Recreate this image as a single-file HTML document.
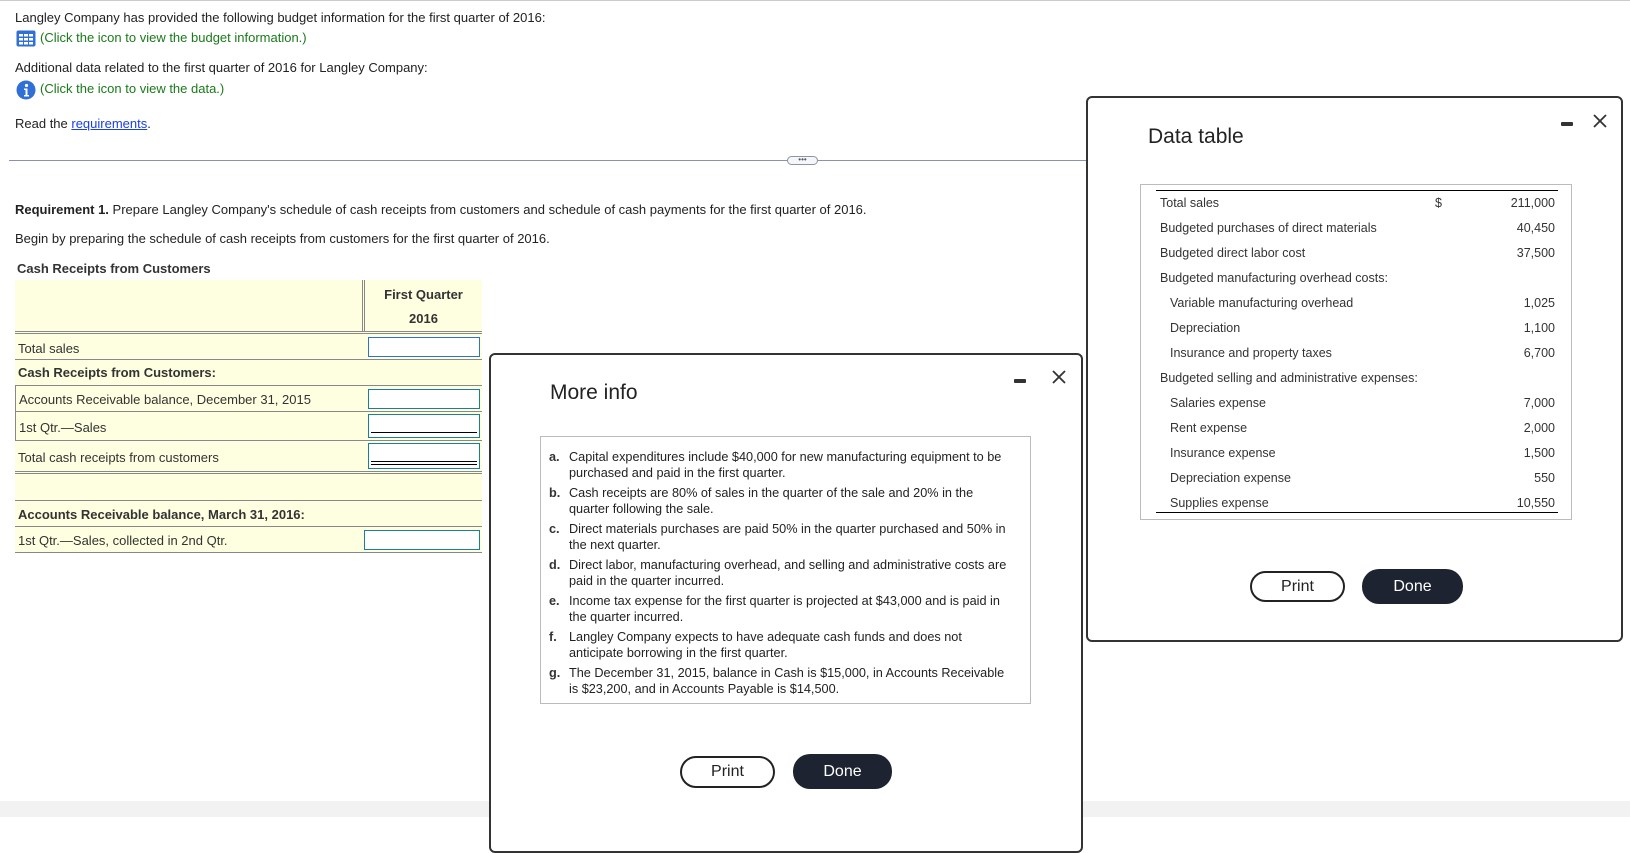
<!DOCTYPE html>
<html><head><meta charset="utf-8"><style>
*{margin:0;padding:0;box-sizing:border-box}
body{width:1630px;height:817px;position:relative;overflow:hidden;background:#fff;font-family:"Liberation Sans",Arial,sans-serif;font-size:13px;color:#222}
.a{position:absolute;white-space:nowrap}
.g{color:#1a7a1a}
.row{position:absolute;left:15px;width:467px;background:#fefee0;color:#333;font-size:13px}
.inp{position:absolute;border:1px solid #1a7e9c;background:#fff}
.btnp{position:absolute;border:2px solid #222;border-radius:16px;background:#fff;text-align:center;font-size:16px;color:#222}
.btnd{position:absolute;border-radius:17px;background:#1d2330;color:#fff;text-align:center;font-size:16px}
.modal{position:absolute;background:#fff;border:2px solid #333;border-radius:6px}
.mi li{list-style:none;position:relative;padding-left:28px;margin-bottom:4px;line-height:16px}
.mi b{position:absolute;left:8px;color:#333}
.dt div{position:absolute;white-space:nowrap;color:#333;font-size:12.5px}
</style></head><body>
<div class="a" style="left:0;top:0;width:1630px;height:1px;background:#ccc"></div>
<div class="a" style="left:15px;top:10px">Langley Company has provided the following budget information for the first quarter of 2016:</div>
<svg class="a" style="left:16px;top:30px" width="20" height="17" viewBox="0 0 20 17"><rect x="0.5" y="0.5" width="19" height="16" rx="2" fill="#2f6fd6"/><g fill="#fff"><rect x="3" y="4" width="4" height="2.5"/><rect x="8" y="4" width="4" height="2.5"/><rect x="13" y="4" width="4" height="2.5"/><rect x="3" y="8" width="4" height="2.5"/><rect x="8" y="8" width="4" height="2.5"/><rect x="13" y="8" width="4" height="2.5"/><rect x="3" y="12" width="4" height="2.5"/><rect x="8" y="12" width="4" height="2.5"/><rect x="13" y="12" width="4" height="2.5"/></g></svg>
<div class="a g" style="left:40px;top:30px">(Click the icon to view the budget information.)</div>
<div class="a" style="left:15px;top:60px">Additional data related to the first quarter of 2016 for Langley Company:</div>
<svg class="a" style="left:16px;top:80px" width="20" height="20" viewBox="0 0 20 20"><circle cx="10" cy="10" r="9.5" fill="#2f6fd6"/><circle cx="10.5" cy="5.5" r="1.6" fill="#fff"/><path d="M8 8.5h3.5v6.5h1.5v1.5H8V15h1.5v-5H8z" fill="#fff"/></svg>
<div class="a g" style="left:40px;top:81px">(Click the icon to view the data.)</div>
<div class="a" style="left:15px;top:116px">Read the <span style="color:#1a3ee8;text-decoration:underline">requirements</span>.</div>
<div class="a" style="left:9px;top:160px;width:1080px;height:1px;background:#8a94a6"></div>
<div class="a" style="left:787px;top:156px;width:31px;height:9px;border:1px solid #8a94a6;border-radius:5px;background:#f4f6f8;font-size:8px;line-height:5px;text-align:center;color:#555">•••</div>
<div class="a" style="left:15px;top:202px"><b>Requirement 1.</b> Prepare Langley Company's schedule of cash receipts from customers and schedule of cash payments for the first quarter of 2016.</div>
<div class="a" style="left:15px;top:231px">Begin by preparing the schedule of cash receipts from customers for the first quarter of 2016.</div>
<div class="a" style="left:17px;top:261px;font-weight:bold;color:#333">Cash Receipts from Customers</div>

<div class="row" style="top:280px;height:51px"></div>
<div class="a" style="left:362px;top:280px;width:3px;height:194px;border-left:1px solid #888;border-right:1px solid #888"></div>
<div class="a" style="left:365px;top:283px;width:117px;text-align:center;font-weight:bold;color:#333;line-height:24px">First Quarter<br>2016</div>
<div class="row" style="top:331px;height:28px;border-top:3px double #888"><span class="a" style="left:3px;top:7px">Total sales</span></div>
<div class="row" style="top:359px;height:26px;border-top:1px solid #888"><span class="a" style="left:3px;top:5px;font-weight:bold">Cash Receipts from Customers:</span></div>
<div class="row" style="top:385px;height:26px;border-top:1px solid #888;border-left:1px solid #888"><span class="a" style="left:3px;top:6px">Accounts Receivable balance, December 31, 2015</span></div>
<div class="row" style="top:411px;height:29px;border-top:1px solid #888;border-left:1px solid #888"><span class="a" style="left:3px;top:8px">1st Qtr.—Sales</span></div>
<div class="row" style="top:440px;height:34px;border-top:1px solid #888;border-bottom:3px double #888"><span class="a" style="left:3px;top:9px">Total cash receipts from customers</span></div>
<div class="row" style="top:474px;height:26px"></div>
<div class="row" style="top:500px;height:26px;border-top:1px solid #888"><span class="a" style="left:3px;top:6px;font-weight:bold">Accounts Receivable balance, March 31, 2016:</span></div>
<div class="row" style="top:526px;height:27px;border-top:1px solid #888;border-bottom:1px solid #888"><span class="a" style="left:3px;top:6px">1st Qtr.—Sales, collected in 2nd Qtr.</span></div>
<div class="inp" style="left:368px;top:337px;width:112px;height:20px;border-color:#2f6fd6"></div>
<div class="inp" style="left:368px;top:389px;width:112px;height:20px"></div>
<div class="inp" style="left:368px;top:414px;width:112px;height:24px"><div class="a" style="left:2px;top:17px;width:106px;height:1px;background:#000"></div></div>
<div class="inp" style="left:368px;top:443px;width:112px;height:26px"><div class="a" style="left:2px;top:17px;width:106px;height:4px;border-top:1px solid #000;border-bottom:1px solid #000"></div></div>
<div class="inp" style="left:364px;top:530px;width:116px;height:20px"></div>

<div class="a" style="left:0;top:801px;width:1630px;height:16px;background:#f2f2f2"></div>

<div class="modal" style="left:489px;top:353px;width:594px;height:500px">
 <div class="a" style="left:59px;top:26px;font-size:21px;color:#222">More info</div>
 <div class="a" style="left:523px;top:24px;width:12px;height:4px;background:#333;border-radius:1px"></div>
 <svg class="a" style="left:560px;top:14px" width="16" height="16" viewBox="0 0 16 16"><path d="M2 2L14 14M14 2L2 14" stroke="#333" stroke-width="1.8"/></svg>
 <div class="a mi" style="left:49px;top:81px;width:491px;height:268px;border:1px solid #bbb;white-space:normal;padding-top:12px;padding-right:22px;font-size:12.7px">
  <ul>
  <li><b>a.</b>Capital expenditures include $40,000 for new manufacturing equipment to be purchased and paid in the first quarter.</li>
  <li><b>b.</b>Cash receipts are 80% of sales in the quarter of the sale and 20% in the quarter following the sale.</li>
  <li><b>c.</b>Direct materials purchases are paid 50% in the quarter purchased and 50% in the next quarter.</li>
  <li><b>d.</b>Direct labor, manufacturing overhead, and selling and administrative costs are paid in the quarter incurred.</li>
  <li><b>e.</b>Income tax expense for the first quarter is projected at $43,000 and is paid in the quarter incurred.</li>
  <li><b>f.</b>Langley Company expects to have adequate cash funds and does not anticipate borrowing in the first quarter.</li>
  <li><b>g.</b>The December 31, 2015, balance in Cash is $15,000, in Accounts Receivable is $23,200, and in Accounts Payable is $14,500.</li>
  </ul>
 </div>
 <div class="btnp" style="left:189px;top:401px;width:95px;height:32px;line-height:28px">Print</div>
 <div class="btnd" style="left:302px;top:399px;width:99px;height:35px;line-height:35px">Done</div>
</div>

<div class="modal" style="left:1086px;top:96px;width:537px;height:546px">
 <div class="a" style="left:60px;top:27px;font-size:21px;color:#222">Data table</div>
 <div class="a" style="left:473px;top:24px;width:12px;height:4px;background:#333;border-radius:1px"></div>
 <svg class="a" style="left:504px;top:15px" width="16" height="16" viewBox="0 0 16 16"><path d="M2 2L14 14M14 2L2 14" stroke="#333" stroke-width="1.8"/></svg>
 <div class="a dt" style="left:52px;top:86px;width:432px;height:336px;border:1px solid #bbb">
  <div style="left:15px;top:5px;width:402px;height:1px;background:#000"></div>
  <div style="left:19px;top:11px">Total sales</div><div style="left:294px;top:11px">$</div><div style="right:16px;top:11px">211,000</div>
  <div style="left:19px;top:36px">Budgeted purchases of direct materials</div><div style="right:16px;top:36px">40,450</div>
  <div style="left:19px;top:61px">Budgeted direct labor cost</div><div style="right:16px;top:61px">37,500</div>
  <div style="left:19px;top:86px">Budgeted manufacturing overhead costs:</div>
  <div style="left:29px;top:111px">Variable manufacturing overhead</div><div style="right:16px;top:111px">1,025</div>
  <div style="left:29px;top:136px">Depreciation</div><div style="right:16px;top:136px">1,100</div>
  <div style="left:29px;top:161px">Insurance and property taxes</div><div style="right:16px;top:161px">6,700</div>
  <div style="left:19px;top:186px">Budgeted selling and administrative expenses:</div>
  <div style="left:29px;top:211px">Salaries expense</div><div style="right:16px;top:211px">7,000</div>
  <div style="left:29px;top:236px">Rent expense</div><div style="right:16px;top:236px">2,000</div>
  <div style="left:29px;top:261px">Insurance expense</div><div style="right:16px;top:261px">1,500</div>
  <div style="left:29px;top:286px">Depreciation expense</div><div style="right:16px;top:286px">550</div>
  <div style="left:29px;top:311px">Supplies expense</div><div style="right:16px;top:311px">10,550</div>
  <div style="left:15px;top:327px;width:402px;height:1px;background:#000"></div>
 </div>
 <div class="btnp" style="left:162px;top:473px;width:95px;height:31px;line-height:27px">Print</div>
 <div class="btnd" style="left:274px;top:471px;width:101px;height:35px;line-height:35px">Done</div>
</div>
</body></html>
